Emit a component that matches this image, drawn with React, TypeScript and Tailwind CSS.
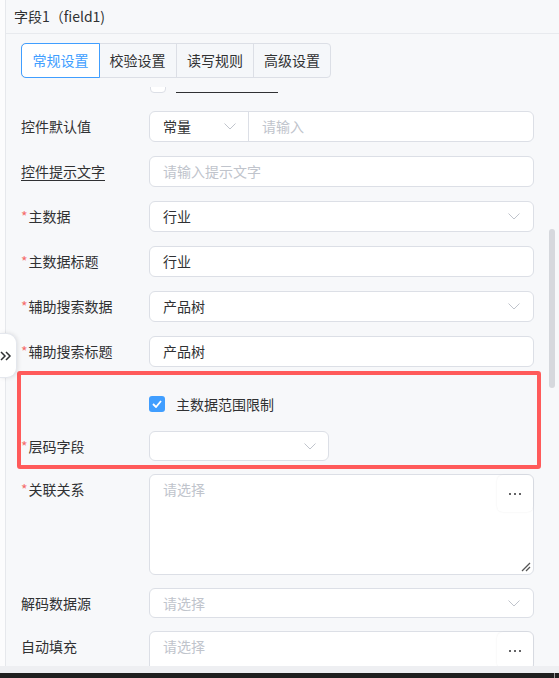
import type { ReactNode } from 'react';

const font = "font-['Noto_Sans_CJK_SC','Noto_Sans',sans-serif]";
const box = 'bg-white border border-[#dcdfe6] rounded-[6px]';

const Chevron = () => (
  <svg width="12" height="7" viewBox="0 0 12 7" fill="none">
    <polyline points="0.5,0.5 6,6 11.5,0.5" stroke="#c0c4cc" strokeWidth="1" />
  </svg>
);

const Label = ({ text, required, tall = false }: { text: string; required?: boolean; tall?: boolean }) => (
  <div className={`w-[128px] shrink-0 text-[14px] text-[#303133] ${tall ? 'leading-[31px]' : 'leading-[30px]'}`}>
    {required && <span className="text-[#f56c6c] mr-[1px]">*</span>}
    {text}
  </div>
);

const Field = ({ value, placeholder, select }: { value?: string; placeholder?: string; select?: boolean }) => (
  <div className={`flex-1 h-[31px] ${box} flex items-center pl-[13px] pr-[13px] text-[14px]`}>
    <span className={`flex-1 ${value ? 'text-[#303133]' : 'text-[#c0c4cc]'}`}>{value ?? placeholder}</span>
    {select && <Chevron />}
  </div>
);

const Dots = () => (
  <div className="absolute top-0 right-0 w-[36px] h-[37px] bg-white rounded-[6px] shadow-[0_0_2px_rgba(0,0,0,0.08)] flex items-center justify-center gap-[3px]">
    <span className="w-[2px] h-[2px] bg-[#303133] rounded-full" />
    <span className="w-[2px] h-[2px] bg-[#303133] rounded-full" />
    <span className="w-[2px] h-[2px] bg-[#303133] rounded-full" />
  </div>
);

const TextArea = ({ resize }: { resize?: boolean }) => (
  <div className={`relative flex-1 h-[101px] ${box} pl-[13px] pt-[4px] text-[14px] text-[#c0c4cc]`}>
    请选择
    <Dots />
    {resize && (
      <svg className="absolute right-[2px] bottom-[2px]" width="10" height="10" viewBox="0 0 10 10">
        <line x1="1" y1="9" x2="9" y2="1" stroke="#555" strokeWidth="1.2" />
        <line x1="5" y1="9" x2="9" y2="5" stroke="#555" strokeWidth="1.2" />
      </svg>
    )}
  </div>
);

const Row = ({ className = '', children }: { className?: string; children: ReactNode }) => (
  <div className={`flex items-start ${className}`}>{children}</div>
);

const tabs = ['常规设置', '校验设置', '读写规则', '高级设置'];

export default function App() {
  return (
    <div className={`relative w-[559px] h-[678px] overflow-hidden flex flex-col ${font}`}>
      <div className="flex flex-1 min-h-0">
        <div className="w-[6px] shrink-0 bg-[#fcfcfd] border-r border-[#e6e8ec]" />
        <div className="flex-1 flex flex-col bg-[#f7f8fa] min-w-0">
          <div className="h-[34px] shrink-0 border-b border-[#e8eaee] pl-[8px] flex items-center text-[14px] text-[#303133]">
            字段1（field1)
          </div>

          <div className="mt-[9px] ml-[15px] flex w-fit h-[35px] border border-[#dcdfe6] rounded-[4px] bg-[#f5f7fa] text-[14px]">
            {tabs.map((t, i) => (
              <div
                key={t}
                className={`w-[77px] flex items-center justify-center ${
                  i === 0
                    ? 'bg-white text-[#409eff] outline outline-1 outline-[#409eff] rounded-l-[4px] relative'
                    : 'text-[#303133] border-l border-[#dcdfe6]'
                } ${i === 1 ? 'border-l-0' : ''}`}
              >
                {t}
              </div>
            ))}
          </div>

          <div className="relative flex-1 min-h-0 mt-[9px] overflow-hidden">
            <div className="pl-[15px] pr-[25px]">
              {/* row that is partly scrolled out of view */}
              <div className="flex items-end h-[16px] -mt-[10px] pl-[129px]">
                <div className="w-[16px] h-[16px] bg-white border border-[#dcdfe6] rounded-[4px]" />
                <div className="ml-[10px] w-[102px] h-[15px] border-b border-[#303133]" />
              </div>

              <Row className="mt-[18px]">
                <Label text="控件默认值" tall />
                <div className={`flex-1 h-[31px] ${box} flex items-center text-[14px]`}>
                  <div className="w-[99px] h-full flex items-center pl-[13px] pr-[12px] border-r border-[#dcdfe6]">
                    <span className="flex-1 text-[#303133]">常量</span>
                    <Chevron />
                  </div>
                  <span className="pl-[13px] text-[#c0c4cc]">请输入</span>
                </div>
              </Row>

              <Row className="mt-[14px]">
                <div className="w-[128px] shrink-0 text-[14px] text-[#303133] leading-[31px]">
                  <span className="border-b border-[#303133] leading-[18px] inline-block">控件提示文字</span>
                </div>
                <Field placeholder="请输入提示文字" />
              </Row>

              <Row className="mt-[14px]">
                <Label text="主数据" required tall />
                <Field value="行业" select />
              </Row>

              <Row className="mt-[14px]">
                <Label text="主数据标题" required tall />
                <Field value="行业" />
              </Row>

              <Row className="mt-[14px]">
                <Label text="辅助搜索数据" required tall />
                <Field value="产品树" select />
              </Row>

              <Row className="mt-[14px]">
                <Label text="辅助搜索标题" required tall />
                <Field value="产品树" />
              </Row>

              {/* highlighted group */}
              <div className="mt-[4px] -ml-[4px] -mr-[7px] border-[4px] border-[#ff5a5a] rounded-[3px] pb-[4px]">
                <div className="mt-[21px] flex items-center h-[16px] pl-[128px]">
                  <div className="w-[16px] h-[16px] rounded-[3px] bg-[#409eff] flex items-center justify-center">
                    <svg width="10" height="8" viewBox="0 0 10 8" fill="none">
                      <polyline points="1,4 4,7 9,1" stroke="white" strokeWidth="1.8" />
                    </svg>
                  </div>
                  <span className="ml-[11px] text-[14px] text-[#303133]">主数据范围限制</span>
                </div>
                <Row className="mt-[19px]">
                  <Label text="层码字段" required />
                  <div className={`w-[180px] h-[30px] ${box} flex items-center justify-end pr-[12px]`}>
                    <Chevron />
                  </div>
                </Row>
              </div>

              <Row className="mt-[5px]">
                <Label text="关联关系" required tall />
                <TextArea resize />
              </Row>

              <Row className="mt-[13px]">
                <Label text="解码数据源" />
                <div className={`flex-1 h-[30px] ${box} flex items-center pl-[13px] pr-[13px] text-[14px]`}>
                  <span className="flex-1 text-[#c0c4cc]">请选择</span>
                  <Chevron />
                </div>
              </Row>

              <Row className="mt-[13px]">
                <Label text="自动填充" />
                <TextArea />
              </Row>
            </div>

            {/* scrollbar thumb */}
            <div className="absolute right-[4px] top-[142px] w-[6px] h-[159px] rounded-full bg-[#d6d8dd]" />
          </div>
        </div>
      </div>
      <div className="h-[7px] shrink-0 bg-[#eeeff2]" />
      <div className="h-[5px] shrink-0 bg-[#1f1f1f] flex justify-end pr-[4px]">
        <div className="w-[1px] h-full bg-[#9a9a9a]" />
      </div>

      {/* collapse handle */}
      <div className="absolute left-0 top-[333px] w-[17px] h-[45px] bg-white rounded-r-[10px] border border-l-0 border-[#e4e7ed] shadow-[1px_0_4px_rgba(0,0,0,0.1)] flex items-center">
        <svg width="12" height="10" viewBox="0 0 12 10" fill="none" className="ml-[0px]">
          <polyline points="1,1 5,5 1,9" stroke="#303133" strokeWidth="1.5" />
          <polyline points="6,1 10,5 6,9" stroke="#303133" strokeWidth="1.5" />
        </svg>
      </div>
    </div>
  );
}
